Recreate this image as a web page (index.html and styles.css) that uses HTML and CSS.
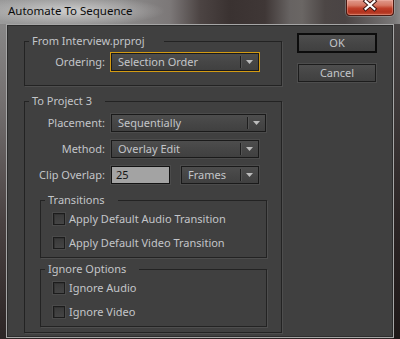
FILE: index.html
```html
<!DOCTYPE html>
<html>
<head>
<meta charset="utf-8">
<link rel="stylesheet" href="styles.css">
</head>
<body>
<div class="frame">
  <div class="titlebar">
    <span class="title">Automate To Sequence</span>
    <div class="close">
      <svg width="48" height="16" viewBox="0 0 48 16">
        <path d="M20 2 L29 10 M29 2 L20 10" stroke="#3a1410" stroke-width="4.2" stroke-linecap="square" fill="none"/>
        <path d="M20 2 L29 10 M29 2 L20 10" stroke="#ffffff" stroke-width="2.2" stroke-linecap="square" fill="none"/>
      </svg>
    </div>
  </div>
  <div class="client">
    <div class="main">
      <div class="group g1">
        <div class="legend lg1">From Interview.prproj</div>
        <div class="row first">
          <span class="label">Ordering:</span>
          <div class="select focused w148"><span class="value">Selection Order</span><span class="drop"><span class="sep"></span><svg class="tri" width="7" height="4" viewBox="0 0 7 4"><polygon points="0,0 7,0 3.5,4" fill="#bcbcbc"/></svg></span></div>
        </div>
      </div>
      <div class="group g2">
        <div class="legend">To Project 3</div>
        <div class="rows">
          <div class="row">
            <span class="label">Placement:</span>
            <div class="select w155"><span class="value">Sequentially</span><span class="drop"><span class="sep"></span><svg class="tri" width="7" height="4" viewBox="0 0 7 4"><polygon points="0,0 7,0 3.5,4" fill="#bcbcbc"/></svg></span></div>
          </div>
          <div class="row">
            <span class="label">Method:</span>
            <div class="select w148"><span class="value">Overlay Edit</span><span class="drop"><span class="sep"></span><svg class="tri" width="7" height="4" viewBox="0 0 7 4"><polygon points="0,0 7,0 3.5,4" fill="#bcbcbc"/></svg></span></div>
          </div>
          <div class="row">
            <span class="label">Clip Overlap:</span>
            <div class="pair">
              <div class="input">25</div>
              <div class="select w78"><span class="value">Frames</span><span class="drop"><span class="sep"></span><svg class="tri" width="7" height="4" viewBox="0 0 7 4"><polygon points="0,0 7,0 3.5,4" fill="#bcbcbc"/></svg></span></div>
            </div>
          </div>
        </div>
        <div class="group sub trans">
          <div class="legend">Transitions</div>
          <div class="checks">
            <div class="check"><span class="box"></span><span class="ctext">Apply Default Audio Transition</span></div>
            <div class="check"><span class="box"></span><span class="ctext">Apply Default Video Transition</span></div>
          </div>
        </div>
        <div class="group sub ignore">
          <div class="legend">Ignore Options</div>
          <div class="checks">
            <div class="check"><span class="box"></span><span class="ctext">Ignore Audio</span></div>
            <div class="check"><span class="box"></span><span class="ctext">Ignore Video</span></div>
          </div>
        </div>
      </div>
    </div>
    <div class="buttons">
      <div class="btn default">OK</div>
      <div class="btn">Cancel</div>
    </div>
  </div>
</div>
</body>
</html>
```

FILE: styles.css
```css
* { box-sizing: border-box; }

html, body {
  margin: 0;
  padding: 0;
}

body {
  width: 400px;
  height: 339px;
  overflow: hidden;
  font-family: "Noto Sans", "Open Sans", sans-serif;
  font-size: 11px;
  color: #c3c5c9;
  background:
    linear-gradient(90deg, rgba(0,0,0,0) 0, rgba(0,0,0,0) 392px, rgba(20,14,14,0.55) 394px),
    linear-gradient(180deg, #8e8e8e 0%, #747070 30%, #4a4242 65%, #2c2525 100%);
}

.frame {
  display: flex;
  flex-direction: column;
  height: 339px;
}

/* ---------- title bar ---------- */
.titlebar {
  height: 24px;
  flex: none;
  display: flex;
  justify-content: space-between;
  align-items: flex-start;
  padding: 0 6px 0 8px;
  background:
    radial-gradient(ellipse 95px 15px at 70px 11px, rgba(225,225,225,0.75), rgba(225,225,225,0) 100%),
    linear-gradient(90deg, #9a9a9a 0, #8c8b8b 120px, #7c7878 170px, #4c4443 200px, #3a3231 230px, #3f3736 265px, #676362 290px, #6a6664 302px, #4c4645 325px, #4a4444 345px, #7a7878 394px, #8a8888 400px);
}

.title {
  padding-top: 4px;
  font-size: 11.5px;
  line-height: 14px;
  color: #0b0b0b;
}

.close {
  width: 48px;
  height: 16px;
  border: 1px solid #4a1a12;
  border-top: none;
  border-radius: 0 0 4px 4px;
  background: linear-gradient(180deg, #e09a8c 0%, #d67864 35%, #c0402a 55%, #b2321e 80%, #c4543a 100%);
  box-shadow: inset 0 0 0 1px rgba(255,200,190,0.35), 0 0 0 1px rgba(230,230,230,0.25);
  display: flex;
  overflow: hidden;
}

.close svg { display: block; margin: -1px 0 0 -1px; }

/* ---------- client area ---------- */
.client {
  margin-left: 6px;
  width: 388px;
  height: 314px;
  border: 1px solid #a6a6a6;
  background: #404040;
  box-shadow: inset 0 0 0 1px #2c2c2c;
  display: flex;
  align-items: flex-start;
}

.main {
  padding: 16px 0 0 17px;
  width: 275px;
  display: flex;
  flex-direction: column;
}

.group {
  border: 1px solid #232323;
  box-shadow: 1px 1px 0 #4e4e4e;
  display: flex;
  flex-direction: column;
  align-items: flex-start;
}

.legend {
  margin: -8px 0 0 4px;
  padding: 0 13px 0 3px;
  line-height: 14px;
  background: #404040;
  white-space: nowrap;
}

.lg1 { padding-right: 19px; }

.g1 {
  width: 258px;
  height: 45px;
}

.g2 {
  width: 258px;
  margin-top: 15px;
  padding-bottom: 5px;
}

.rows {
  display: flex;
  flex-direction: column;
  gap: 8px;
  margin-top: 6px;
}

.row {
  display: grid;
  grid-template-columns: 80px auto;
  column-gap: 6px;
  align-items: center;
  height: 18px;
}

.row.first { margin-top: 5px; }

.label {
  text-align: right;
  line-height: 18px;
  white-space: nowrap;
}

.select {
  height: 18px;
  border: 1px solid #1a1a1a;
  box-shadow: 0 0 0 1px #4b4b4b;
  background: linear-gradient(180deg, #4d4d4d 0%, #464646 50%, #404040 100%);
  display: flex;
  align-items: center;
}

.select.focused { box-shadow: 0 0 0 1px #d39b13; }

.w148 { width: 148px; }
.w155 { width: 155px; }
.w78 { width: 78px; }

.value {
  flex: 1;
  padding-left: 6px;
  line-height: 16px;
  white-space: nowrap;
}

.drop {
  width: 18px;
  height: 16px;
  display: flex;
  align-items: center;
}

.sep {
  width: 1px;
  height: 12px;
  background: #1e1e1e;
  box-shadow: 1px 0 0 #545454;
}

.tri { display: block; margin-left: 5px; }

.pair {
  display: flex;
  gap: 11px;
}

.input {
  width: 59px;
  height: 18px;
  border: 1px solid #121212;
  box-shadow: 0 0 0 1px #4b4b4b;
  background: #a3a3a3;
  color: #141414;
  padding-left: 4px;
  line-height: 16px;
}

/* ---------- sub groups ---------- */
.sub {
  width: 227px;
  height: 58px;
  margin-left: 15px;
}

.trans { margin-top: 16px; }
.ignore { margin-top: 11px; }

.checks {
  margin-top: 6px;
  padding-left: 12px;
  display: flex;
  flex-direction: column;
  gap: 12px;
}

.check {
  display: flex;
  align-items: center;
  gap: 4px;
  height: 12px;
}

.box {
  width: 12px;
  height: 12px;
  border: 1px solid #1c1c1c;
  background: linear-gradient(180deg, #3a3a3a 0%, #454545 100%);
  box-shadow: inset 1px 1px 0 #333, 0 0 0 1px #4a4a4a;
}

.ctext {
  line-height: 12px;
  white-space: nowrap;
}

/* ---------- buttons ---------- */
.buttons {
  margin-left: 16px;
  padding-top: 9px;
  display: flex;
  flex-direction: column;
  gap: 12px;
}

.btn {
  width: 78px;
  height: 18px;
  border: 1px solid #1c1c1c;
  box-shadow: 0 0 0 1px #4d4d4d;
  background: linear-gradient(180deg, #4e4e4e 0%, #464646 50%, #404040 100%);
  text-align: center;
  line-height: 16px;
}

.btn.default {
  border-color: #0c0c0c;
  box-shadow: 0 0 0 1px #0c0c0c;
}
```
